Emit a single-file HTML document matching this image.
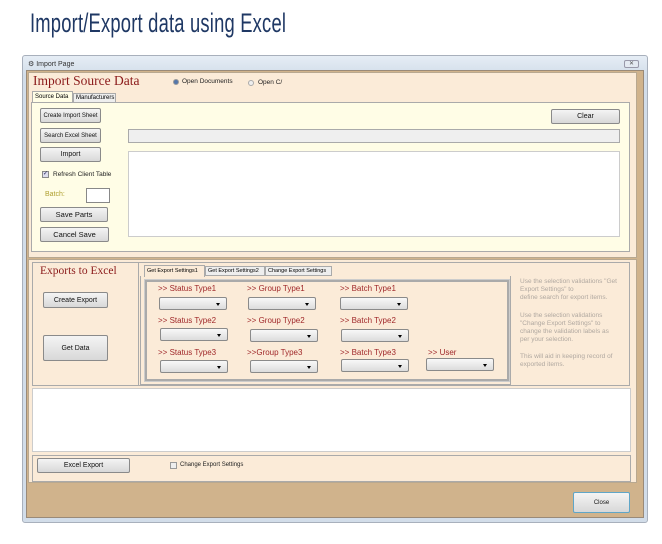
<!DOCTYPE html>
<html><head><meta charset="utf-8"><style>
*{margin:0;padding:0;box-sizing:border-box}
body{width:662px;height:544px;background:#fff;position:relative;overflow:hidden;font-family:"Liberation Sans",sans-serif}
div,span{position:absolute}
.t{font-size:7px;color:#222;white-space:nowrap}
.btn{background:linear-gradient(#f4f4f4,#d8d8d8);border:1px solid #8a8a8a;border-radius:2px;font-size:7px;color:#111;text-align:center;display:flex;align-items:center;justify-content:center}
.dd{width:68px;height:13px;background:linear-gradient(#f8f8f8,#dcdcdc);border:1px solid #8a8a8a;border-radius:2px}
.dd:after{content:"";position:absolute;right:6px;top:5px;border:2.5px solid transparent;border-top:3px solid #000}
.lb{font-size:8px;color:#a0282a;white-space:nowrap}
.help{font-size:6.5px;color:#b0a8a0;line-height:8px;white-space:nowrap}
</style></head><body>
<div style="left:30px;top:8px;font-size:27px;color:#1f3864;transform:scaleX(0.68);transform-origin:left top;white-space:nowrap;letter-spacing:0.3px">Import/Export data using Excel</div>

<div style="left:22px;top:55px;width:626px;height:468px;border:1px solid #a8b0bc;border-radius:3px;background:linear-gradient(#e6edf5,#d2dde9 20px,#d2dde9)"></div>
<div class="t" style="left:28px;top:60px;font-size:7px;color:#333">⚙ Import Page</div>
<div style="left:624px;top:60px;width:15px;height:8px;border:1px solid #99a;border-radius:2px;background:#e4eaf2;font-size:6px;text-align:center;line-height:6px;color:#555">✕</div>
<div style="left:26px;top:70px;width:618px;height:448px;background:#d0b38c;border:1px solid #9a8a78"></div>

<!-- import panel -->
<div style="left:28px;top:72px;width:609px;height:186px;background:#fbebd8;border:1px solid #b8a890"></div>
<div style="left:33px;top:73px;font-family:'Liberation Serif',serif;font-size:13.5px;color:#8b1a1a;white-space:nowrap">Import Source Data</div>
<div style="left:173px;top:79px;width:6px;height:6px;border-radius:50%;background:#5577aa;border:1px solid #999"></div>
<div class="t" style="left:182px;top:78px;font-size:6.5px">Open Documents</div>
<div style="left:248px;top:80px;width:6px;height:6px;border-radius:50%;background:#eee;border:1px solid #aaa"></div>
<div class="t" style="left:258px;top:79px;font-size:6.5px">Open C/</div>
<div style="left:32px;top:91px;width:41px;height:12px;background:#fffde6;border:1px solid #aaa;border-bottom:none;font-size:6px;padding:2px 2px;white-space:nowrap">Source Data</div>
<div style="left:73px;top:93px;width:43px;height:10px;background:#eee;border:1px solid #aaa;font-size:6px;padding:1px 2px;white-space:nowrap">Manufacturers</div>
<div style="left:31px;top:102px;width:599px;height:150px;background:#fffde6;border:1px solid #aaa"></div>
<div class="btn" style="left:40px;top:108px;width:61px;height:15px;font-size:6px">Create Import Sheet</div>
<div class="btn" style="left:40px;top:128px;width:61px;height:15px;font-size:6px">Search Excel Sheet</div>
<div class="btn" style="left:40px;top:147px;width:61px;height:15px">Import</div>
<div style="left:42px;top:171px;width:7px;height:7px;border:1px solid #888;background:#dde;font-size:6px;line-height:5px;color:#225">✓</div>
<div class="t" style="left:53px;top:171px;font-size:6.5px">Refresh Client Table</div>
<div class="t" style="left:45px;top:191px;color:#b0a030">Batch:</div>
<div style="left:86px;top:188px;width:24px;height:15px;background:#fff;border:1px solid #888"></div>
<div class="btn" style="left:40px;top:207px;width:68px;height:15px;font-size:7.5px">Save Parts</div>
<div class="btn" style="left:40px;top:227px;width:69px;height:15px;font-size:7.5px">Cancel Save</div>
<div class="btn" style="left:551px;top:109px;width:69px;height:15px">Clear</div>
<div style="left:128px;top:129px;width:492px;height:14px;background:#efefef;border:1px solid #aaa"></div>
<div style="left:128px;top:151px;width:492px;height:86px;background:#fff;border:1px solid #ccc"></div>

<!-- export panel -->
<div style="left:28px;top:259px;width:609px;height:224px;background:#fbebd8;border:1px solid #b8a890"></div>
<div style="left:32px;top:262px;width:598px;height:124px;border:1px solid #aaa"></div>
<div style="left:138px;top:262px;width:1px;height:124px;background:#aaa"></div>
<div style="left:40px;top:265px;font-family:'Liberation Serif',serif;font-size:11.5px;color:#8b1a1a;white-space:nowrap">Exports to Excel</div>
<div class="btn" style="left:43px;top:292px;width:65px;height:16px">Create Export</div>
<div class="btn" style="left:43px;top:335px;width:65px;height:26px">Get Data</div>
<div style="left:144px;top:265px;width:61px;height:12px;background:#fbebd8;border:1px solid #aaa;border-bottom:none;font-size:5.5px;padding:2px 2px;white-space:nowrap">Get Export Settings1</div>
<div style="left:205px;top:266px;width:60px;height:10px;background:#eee;border:1px solid #aaa;font-size:5.5px;padding:1px 2px;white-space:nowrap">Get Export Settings2</div>
<div style="left:265px;top:266px;width:67px;height:10px;background:#eee;border:1px solid #aaa;font-size:5.5px;padding:1px 2px;white-space:nowrap">Change Export Settings</div>
<div style="left:140px;top:276px;width:371px;height:109px;border:1px solid #aaa;border-top:none"></div>
<div style="left:145px;top:280px;width:364px;height:101px;border:2px solid #aaa;outline:1px solid #ccc"></div>
<div class="lb" style="left:158px;top:284px">&gt;&gt; Status Type1</div>
<div class="lb" style="left:247px;top:284px">&gt;&gt; Group Type1</div>
<div class="lb" style="left:340px;top:284px">&gt;&gt; Batch Type1</div>
<div class="dd" style="left:159px;top:297px"></div>
<div class="dd" style="left:248px;top:297px"></div>
<div class="dd" style="left:340px;top:297px"></div>
<div class="lb" style="left:158px;top:316px">&gt;&gt; Status Type2</div>
<div class="lb" style="left:247px;top:316px">&gt;&gt; Group Type2</div>
<div class="lb" style="left:340px;top:316px">&gt;&gt; Batch Type2</div>
<div class="dd" style="left:160px;top:328px"></div>
<div class="dd" style="left:250px;top:329px"></div>
<div class="dd" style="left:341px;top:329px"></div>
<div class="lb" style="left:158px;top:348px">&gt;&gt; Status Type3</div>
<div class="lb" style="left:247px;top:348px">&gt;&gt;Group Type3</div>
<div class="lb" style="left:340px;top:348px">&gt;&gt; Batch Type3</div>
<div class="lb" style="left:428px;top:348px">&gt;&gt; User</div>
<div class="dd" style="left:160px;top:360px"></div>
<div class="dd" style="left:250px;top:360px"></div>
<div class="dd" style="left:341px;top:359px"></div>
<div class="dd" style="left:426px;top:358px"></div>
<div class="help" style="left:520px;top:278px">Use the selection validations "Get<br>Export Settings" to<br>define search for export items.</div>
<div class="help" style="left:520px;top:312px">Use the selection validations<br>"Change Export Settings" to<br>change the validation labels as<br>per your selection.</div>
<div class="help" style="left:520px;top:353px">This will aid in keeping record of<br>exported items.</div>

<div style="left:32px;top:388px;width:599px;height:64px;background:#fff;border:1px solid #ccc"></div>
<div style="left:32px;top:455px;width:599px;height:27px;border:1px solid #aaa"></div>
<div class="btn" style="left:37px;top:458px;width:93px;height:15px">Excel Export</div>
<div style="left:170px;top:462px;width:7px;height:7px;border:1px solid #999;background:#eee"></div>
<div class="t" style="left:180px;top:462px;font-size:6px">Change Export Settings</div>
<div class="btn" style="left:573px;top:492px;width:57px;height:21px;border:1px solid #5fa6c8;font-size:6px">Close</div>
</body></html>
